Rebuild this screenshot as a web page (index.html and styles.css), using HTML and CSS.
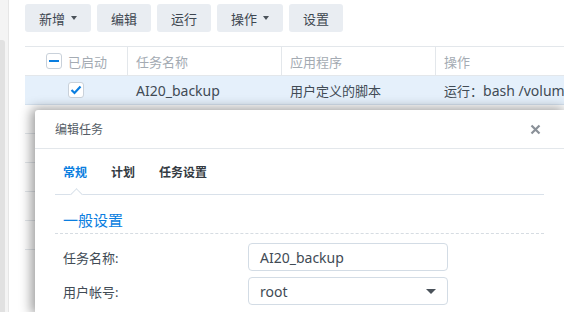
FILE: index.html
```html
<!DOCTYPE html>
<html lang="zh-CN">
<head>
  <meta charset="UTF-8" />
  <title>任务计划</title>
  <link rel="stylesheet" href="styles.css">
</head>
<body>
  <div class="page">
    <div class="side">
      <div class="side-panel"></div>
    </div>
    <div class="main">
      <div class="toolbar">
        <button class="btn">新增 <span class="caret"></span></button>
        <button class="btn">编辑</button>
        <button class="btn">运行</button>
        <button class="btn">操作 <span class="caret"></span></button>
        <button class="btn">设置</button>
      </div>
      <div class="grid">
        <div class="row head">
          <div class="cell c1"><span class="check mixed"></span>已启动</div>
          <div class="cell c2">任务名称</div>
          <div class="cell c3">应用程序</div>
          <div class="cell c4">操作</div>
        </div>
        <div class="row sel">
          <div class="cell c1 pad">
            <span class="check on">
              <svg width="12" height="10" viewBox="0 0 12 10"><path d="M1.5 5 L4.5 8 L10.5 1.5" fill="none" stroke="#0a7ee0" stroke-width="2.2"/></svg>
            </span>
          </div>
          <div class="cell c2"><span class="en">AI20_backup</span></div>
          <div class="cell c3">用户定义的脚本</div>
          <div class="cell c4">运行：<span class="en">bash /volume1/homes/backup.sh</span></div>
        </div>
        <div class="row empty"></div>
        <div class="row empty"></div>
        <div class="row empty"></div>
        <div class="row empty"></div>
        <div class="row empty"></div>
      </div>
    </div>
  </div>

  <div class="dialog">
    <div class="dlg-head">
      <span class="dlg-title">编辑任务</span>
      <span class="close">
        <svg width="11" height="11" viewBox="0 0 11 11"><path d="M1.5 1.5 L9.5 9.5 M9.5 1.5 L1.5 9.5" stroke="#8a9098" stroke-width="2.2"/></svg>
      </span>
    </div>
    <div class="dlg-body">
      <div class="tabs">
        <span class="tab active">常规</span>
        <span class="tab">计划</span>
        <span class="tab">任务设置</span>
      </div>
      <div class="section">一般设置</div>
      <div class="form-row first">
        <label class="label">任务名称:</label>
        <div class="field"><span class="en">AI20_backup</span></div>
      </div>
      <div class="form-row">
        <label class="label">用户帐号:</label>
        <div class="field select"><span class="en">root</span> <span class="caret dark"></span></div>
      </div>
    </div>
  </div>
</body>
</html>
```

FILE: styles.css
```css
html {
  overflow: hidden;
}
body {
  margin: 0;
  width: 564px;
  height: 312px;
  overflow: hidden;
  background: #fff;
  font-family: "Noto Sans", "Noto Sans CJK SC", sans-serif;
  font-size: 13px;
  color: #414b55;
}
.en {
  font-size: 14px;
}
.page {
  display: flex;
  height: 312px;
}
.side {
  flex: none;
  width: 8px;
  background: #f4f4f4;
  border-right: 1px solid #e6e6e6;
  padding-top: 40px;
}
.side-panel {
  width: 5px;
  height: 272px;
  background: #e1e1e1;
  border-radius: 0 3px 0 0;
}
.main {
  flex: 1;
  min-width: 0;
  overflow: hidden;
  padding-left: 16px;
}
.toolbar {
  display: flex;
  gap: 6px;
  padding-top: 4px;
  height: 28px;
}
.btn {
  height: 28px;
  padding: 0 14px;
  border: none;
  border-radius: 3px;
  background: #e9edf2;
  font-family: inherit;
  font-size: 13px;
  color: #3d4650;
  display: flex;
  align-items: center;
  gap: 6px;
}
.caret {
  display: inline-block;
  width: 0;
  height: 0;
  border-left: 3.5px solid transparent;
  border-right: 3.5px solid transparent;
  border-top: 4px solid #4a525a;
}
.grid {
  margin-top: 14px;
  border-top: 1px solid #e3e7eb;
}
.row {
  display: flex;
  height: 29px;
  border-bottom: 1px solid #e3e7eb;
  box-sizing: border-box;
}
.row.head {
  color: #a4abb3;
}
.row.sel {
  background: #e5f0fb;
  border-bottom-color: #d6e3f0;
}
.cell {
  flex: none;
  display: flex;
  align-items: center;
  padding-left: 8px;
  white-space: nowrap;
  overflow: hidden;
  box-sizing: border-box;
}
.head .cell + .cell {
  border-left: 1px solid #e3e7eb;
}
.sel .cell + .cell {
  border-left: 1px solid transparent;
}
.c1 { width: 102px; padding-left: 21px; gap: 6px; }
.c1.pad { padding-left: 43px; }
.c2 { width: 154px; }
.c3 { width: 154px; }
.c4 { flex: 1; min-width: 0; }
.check {
  width: 16px;
  height: 16px;
  box-sizing: border-box;
  border: 1px solid #c9d1da;
  border-radius: 3px;
  background: #fff;
  display: flex;
  align-items: center;
  justify-content: center;
}
.check.mixed::before {
  content: "";
  width: 10px;
  height: 2px;
  background: #0a7ee0;
}
.dialog {
  position: absolute;
  left: 35px;
  top: 110px;
  width: 529px;
  height: 202px;
  background: #fff;
  border-radius: 3px 0 0 0;
  box-shadow: -2px 0 12px 2px rgba(0, 0, 0, 0.38);
}
.dlg-head {
  height: 38px;
  border-bottom: 1px solid #e3e7eb;
  display: flex;
  align-items: center;
  justify-content: space-between;
  padding: 0 23px 0 20px;
}
.dlg-title {
  color: #555d66;
  font-size: 12px;
}
.close {
  display: flex;
  margin-top: 1px;
}
.dlg-body {
  padding: 0 20px;
}
.tabs {
  height: 45px;
  display: flex;
  align-items: center;
  gap: 24px;
  padding-left: 8px;
  border-bottom: 1px solid #d9e1ea;
  position: relative;
}
.tab {
  font-weight: bold;
  color: #333a42;
  font-size: 12px;
}
.tab.active {
  color: #0a7ee0;
}
.tabs::after {
  content: "";
  position: absolute;
  left: 17px;
  bottom: -5px;
  width: 8px;
  height: 8px;
  background: #fff;
  border-left: 1px solid #d9e1ea;
  border-top: 1px solid #d9e1ea;
  transform: rotate(45deg);
}
.section {
  color: #0a7ee0;
  font-size: 15px;
  padding: 12px 0 0 8px;
  height: 26px;
  line-height: 26px;
  border-bottom: 1px dashed #d6dce2;
}
.form-row {
  display: flex;
  align-items: center;
  padding-left: 8px;
  margin-top: 6px;
}
.form-row.first {
  margin-top: 9px;
}
.label {
  width: 185px;
  color: #414b55;
}
.field {
  width: 200px;
  height: 28px;
  box-sizing: border-box;
  border: 1px solid #d3dce5;
  border-radius: 4px;
  padding: 0 11px;
  display: flex;
  align-items: center;
  justify-content: space-between;
  color: #414b55;
}
.caret.dark {
  border-left-width: 5px;
  border-right-width: 5px;
  border-top-width: 5px;
}
```
